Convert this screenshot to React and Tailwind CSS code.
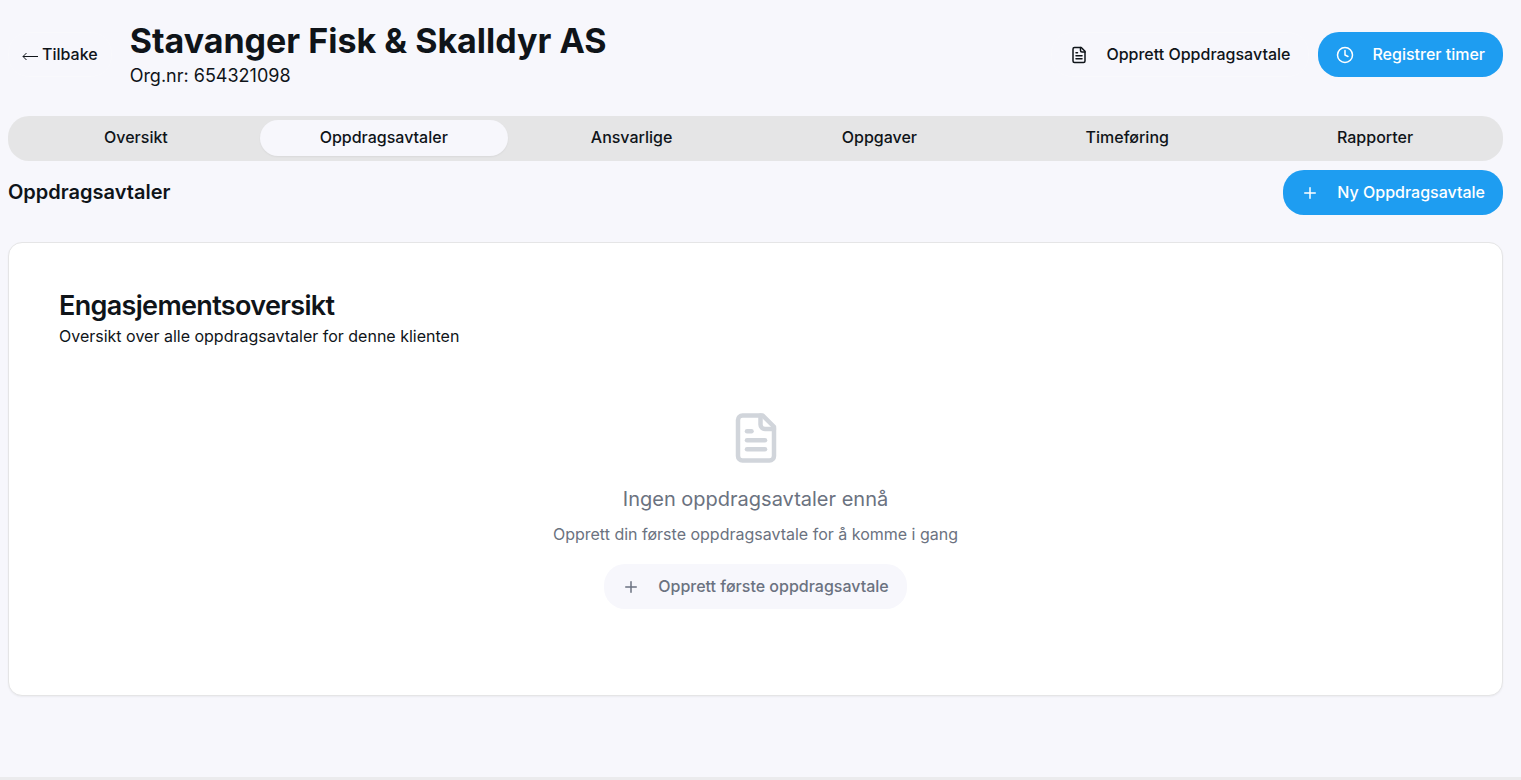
import { Clock, Plus } from "lucide-react";

const tabs = [
  "Oversikt",
  "Oppdragsavtaler",
  "Ansvarlige",
  "Oppgaver",
  "Timeføring",
  "Rapporter",
];

const variants = {
  primary: "bg-[#1e9df1] text-white",
  outline: "border border-[#f9f9fc] bg-transparent text-[#0f1419]",
  soft: "bg-[#f7f7fc] text-[#6b7280]",
};

function DocumentIcon(props) {
  return (
    <svg
      viewBox="0 0 24 24"
      fill="none"
      stroke="currentColor"
      strokeWidth="2"
      strokeLinecap="round"
      strokeLinejoin="round"
      {...props}
    >
      <path d="M15 2H6a2 2 0 0 0-2 2v16a2 2 0 0 0 2 2h12a2 2 0 0 0 2-2V7Z" />
      <path d="M14 2v4a2 2 0 0 0 2 2h4" />
      <path d="M10 9H8" />
      <path d="M16 13H8" />
      <path d="M16 17H8" />
    </svg>
  );
}

function BackArrowIcon(props) {
  return (
    <svg viewBox="0 0 16 16" fill="none" stroke="currentColor" {...props}>
      <path d="M1 9.5h15" />
      <path d="M4.5 6L1 9.5L4.5 13" />
    </svg>
  );
}

function Button({ variant, icon: Icon, children }) {
  return (
    <button
      type="button"
      className={`inline-flex h-[45px] items-center justify-center gap-[18px] rounded-[21px] px-[18px] text-[16px] leading-6 font-medium whitespace-nowrap ${variants[variant]}`}
    >
      <Icon className="size-[18px]" aria-hidden="true" />
      <span className="pb-0.5">{children}</span>
    </button>
  );
}

export default function App() {
  return (
    <div className="flex min-h-screen flex-col bg-[#f7f7fc] font-['Inter','Liberation_Sans',sans-serif] text-[#0f1419]">
      <main className="flex flex-col pt-5 pr-[18px] pl-2">
        <header className="flex items-center justify-between">
          <div className="flex items-center gap-[18px]">
            <button
              type="button"
              className="inline-flex h-[45px] items-center gap-1 rounded-[21px] border border-[#f9f9fc] px-[13px] text-[16px] leading-6 font-medium whitespace-nowrap"
            >
              <BackArrowIcon className="size-4" aria-hidden="true" />
              <span className="pb-0.5">Tilbake</span>
            </button>
            <div>
              <h1 className="text-[34px] leading-[42px] font-bold">
                Stavanger Fisk &amp; Skalldyr AS
              </h1>
              <p className="text-[18px] leading-[27px]">Org.nr: 654321098</p>
            </div>
          </div>
          <div className="flex gap-[9px]">
            <Button variant="outline" icon={DocumentIcon}>
              Opprett Oppdragsavtale
            </Button>
            <Button variant="primary" icon={Clock}>
              Registrer timer
            </Button>
          </div>
        </header>

        <div
          role="tablist"
          className="mt-[27px] grid h-[45px] grid-cols-6 rounded-[21px] bg-[#e5e5e6] p-1"
        >
          {tabs.map((tab) => (
            <button
              key={tab}
              type="button"
              role="tab"
              aria-selected={tab === "Oppdragsavtaler"}
              className="h-9 rounded-[18px] pb-0.5 text-[16px] leading-6 font-medium aria-selected:bg-[#f7f7fc] aria-selected:shadow-xs"
            >
              {tab}
            </button>
          ))}
        </div>

        <div className="mt-[9px] flex items-center justify-between">
          <h2 className="pb-0.5 text-[20px] leading-7 font-semibold">Oppdragsavtaler</h2>
          <Button variant="primary" icon={Plus}>
            Ny Oppdragsavtale
          </Button>
        </div>

        <section className="mt-[27px] rounded-[14px] border border-[#e5e5e6] bg-white px-[50px] pt-[49px] pb-[86px] shadow-xs">
          <h3 className="text-[27px] leading-7 font-semibold tracking-tight">
            Engasjementsoversikt
          </h3>
          <p className="mt-1 text-[16px] leading-6">
            Oversikt over alle oppdragsavtaler for denne klienten
          </p>
          <div className="mt-[63px] flex flex-col items-center text-[#6b7280]">
            <DocumentIcon className="size-[54px] text-[#d1d5db]" aria-hidden="true" />
            <p className="mt-[18px] text-[20px] leading-8">Ingen oppdragsavtaler ennå</p>
            <p className="mt-[7px] mb-[18px] text-[16px] leading-6">
              Opprett din første oppdragsavtale for å komme i gang
            </p>
            <Button variant="soft" icon={Plus}>
              Opprett første oppdragsavtale
            </Button>
          </div>
        </section>
      </main>
      <div className="mt-auto h-[3px] bg-[#ebebed]" />
    </div>
  );
}
